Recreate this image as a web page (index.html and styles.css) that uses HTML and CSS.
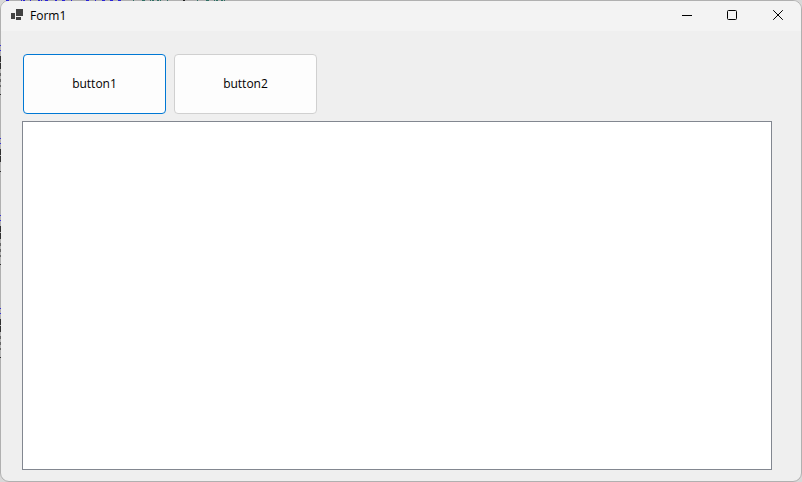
FILE: index.html
```html
<!DOCTYPE html>
<html lang="en">
<head>
<meta charset="utf-8">
<title>Form1</title>
<link rel="stylesheet" href="styles.css">
</head>
<body>
<div class="window">
  <header class="titlebar">
    <svg class="app-icon" width="12" height="11" viewBox="0 0 12 11" shape-rendering="crispEdges" fill="#424242" aria-hidden="true"><path d="M5 0h7v7H5zM0 4h4v6H0zM5 8h5v3H5z"/></svg>
    <h1 class="title">Form1</h1>
    <button class="caption" type="button" aria-label="Minimize"><svg width="10" height="10" viewBox="0 0 10 10"><path d="M1 5.5h10"/></svg></button>
    <button class="caption" type="button" aria-label="Maximize"><svg width="10" height="10" viewBox="0 0 10 10"><rect x=".5" y=".5" width="9" height="9" rx="1"/></svg></button>
    <button class="caption" type="button" aria-label="Close"><svg width="10" height="10" viewBox="0 0 10 10"><path d="M.2.2l9.6 9.6M9.8.2L.2 9.8"/></svg></button>
  </header>
  <main class="form">
    <div class="actions">
      <button class="btn btn-default" type="button">button1</button>
      <button class="btn" type="button">button2</button>
    </div>
    <textarea class="text" aria-label="Text"></textarea>
  </main>
</div>
<svg class="behind behind-top" width="240" height="1" shape-rendering="crispEdges" aria-hidden="true">
  <path stroke="#2a22d8" d="M6 .5h3M21 .5h1M23 .5h2M30 .5h1M38 .5h2M41 .5h1M45 .5h3M55 .5h2M62 .5h3M71 .5h1M86 .5h3M95 .5h1M102 .5h3M110 .5h3M118 .5h3"/>
  <path stroke="#2f6f64" d="M133 .5h1M142 .5h3M150 .5h1M152 .5h2M157 .5h2M160 .5h1M167 .5h1M197 .5h1M206 .5h3M214 .5h1M216 .5h2M221 .5h2M224 .5h1"/>
  <path stroke="#222" d="M183 .5h2"/>
</svg>
<svg class="behind behind-left" width="1" height="370" shape-rendering="crispEdges" aria-hidden="true">
  <path stroke="#3a32d8" d="M.5 45v1M.5 50v1M.5 138v1M.5 143v1M.5 215v1M.5 220v1M.5 308v1M.5 313v1"/>
  <path stroke="#303030" d="M.5 56v6M.5 63v6M.5 94v1M.5 149v6M.5 156v6M.5 171v1M.5 226v6M.5 233v6M.5 264v1M.5 319v6M.5 326v6M.5 357v1"/>
  <path stroke="#666" d="M.5 73v3M.5 79v3M.5 85v2M.5 243v3M.5 249v3M.5 255v2M.5 336v3M.5 342v3M.5 348v2"/>
</svg>
</body>
</html>
```
FILE: styles.css
```css
* { box-sizing: border-box; }

body {
  margin: 0;
  background: #d8d8d8;
  color: #000;
  font: 12px/16px "Open Sans", "Noto Sans", sans-serif;
}

.window {
  display: flex;
  flex-direction: column;
  min-height: 100vh;
  overflow: hidden;
  border: 1px solid #b0b0b0;
  border-radius: 9px;
  background: #efefef;
}

.titlebar {
  display: flex;
  align-items: center;
  height: 30px;
  padding-left: 10px;
  background: #f3f3f3;
}

.app-icon { margin-bottom: 3px; }

.title {
  flex: 1;
  margin: 0 0 0 7px;
  font-size: 12px;
  font-weight: 400;
}

.caption {
  display: flex;
  align-items: center;
  align-self: flex-start;
  justify-content: center;
  width: 46px;
  height: 28px;
  padding: 0;
  border: 0;
  background: none;
}

.caption svg {
  overflow: visible;
  fill: none;
  stroke: #000;
}

.form {
  flex: 1;
  display: flex;
  flex-direction: column;
  gap: 7px;
  padding: 23px 29px 11px 21px;
}

.actions {
  display: flex;
  gap: 8px;
  padding-left: 1px;
}

.btn {
  width: 143px;
  height: 60px;
  padding: 0;
  border: 1px solid #d0d0d0;
  border-radius: 4px;
  background: #fdfdfd;
  color: #000;
  font: inherit;
}

.btn-default { border-color: #0078d4; }

.text {
  flex: 1;
  width: 100%;
  padding: 2px;
  resize: none;
  border: 1px solid #828790;
  border-radius: 0;
  outline: 0;
  background: #fff;
  font: inherit;
}

.behind {
  position: absolute;
  top: 0;
  left: 0;
  pointer-events: none;
}
```
